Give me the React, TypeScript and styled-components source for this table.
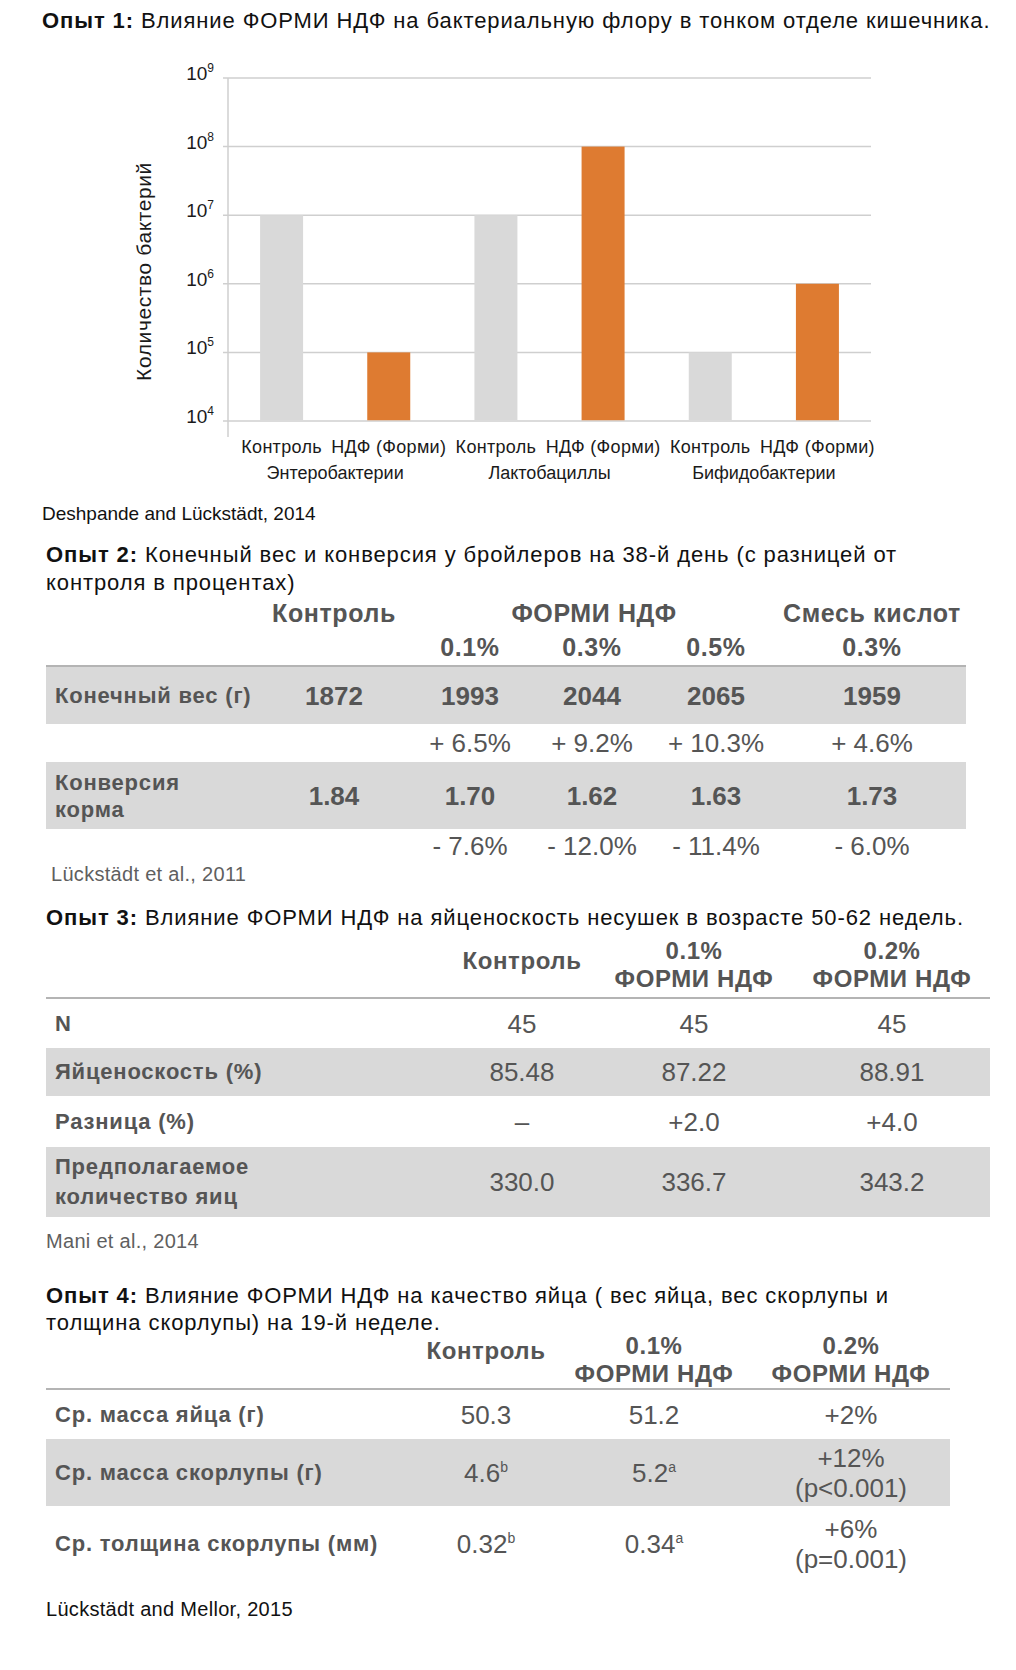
import React from 'react';
import styled, { createGlobalStyle } from 'styled-components';

const GlobalStyle = createGlobalStyle`
	body {
		margin: 0;
		background: #ffffff;
		font-family: "Liberation Sans", Arial, sans-serif;
	}
`;

const Page = styled.div`
	width: 1016px;
	padding-top: 7px;
	padding-bottom: 40px;
	font-family: "Liberation Sans", Arial, sans-serif;
	color: #111111;
`;

const Section = styled.section<{ $indent: number; $top?: number }>`
	padding-left: ${p => p.$indent}px;
	margin-top: ${p => p.$top || 0}px;
`;

const Title = styled.h2<{ $lh?: number; $wrap?: boolean }>`
	margin: 0;
	max-width: ${p => (p.$wrap ? '925px' : 'none')};
	font-size: 22px;
	font-weight: 400;
	letter-spacing: 0.9px;
	line-height: ${p => p.$lh || 28}px;
	color: #111111;
	white-space: ${p => (p.$wrap ? 'normal' : 'nowrap')};

	b {
		font-weight: 700;
	}
`;

const Source = styled.p<{ $muted?: boolean; $top?: number; $shift?: number; $size?: number }>`
	margin: ${p => p.$top || 0}px 0 0 ${p => p.$shift || 0}px;
	font-size: ${p => p.$size || 20}px;
	letter-spacing: ${p => (p.$size ? 0 : 0.3)}px;
	line-height: 24px;
	color: ${p => (p.$muted ? '#5f5f5f' : '#111111')};
`;

const ChartBox = styled.svg`
	display: block;
	font-family: "Liberation Sans", Arial, sans-serif;
`;

const Table = styled.div<{ $width: number; $top?: number }>`
	width: ${p => p.$width}px;
	margin-top: ${p => p.$top || 0}px;
	color: #555555;
`;

const Head = styled.div`
	border-bottom: 2px solid #b4b4b4;
`;

const Row = styled.div<{ $cols: string; $h: number; $shade?: boolean }>`
	display: grid;
	grid-template-columns: ${p => p.$cols};
	height: ${p => p.$h}px;
	background: ${p => (p.$shade ? '#d9d9d9' : 'transparent')};
`;

const Cell = styled.div<{ $span?: number; $size?: number; $bold?: boolean; $lh?: number; $lift?: number }>`
	grid-column: span ${p => p.$span || 1};
	display: flex;
	align-items: center;
	justify-content: center;
	padding-bottom: ${p => p.$lift || 0}px;
	text-align: center;
	font-size: ${p => p.$size || 26}px;
	font-weight: ${p => (p.$bold ? 700 : 400)};
	letter-spacing: ${p => (p.$bold && (p.$size || 26) < 26 ? 0.6 : 0)}px;
	line-height: ${p => p.$lh || 28}px;
	white-space: nowrap;
`;

const Label = styled.div<{ $lh?: number }>`
	display: flex;
	align-items: center;
	padding-left: 9px;
	font-size: 22px;
	font-weight: 700;
	letter-spacing: 0.8px;
	line-height: ${p => p.$lh || 28}px;
	white-space: nowrap;
`;

const Sup = styled.sup`
	font-size: 14px;
	line-height: 0;
	vertical-align: 10px;
	letter-spacing: 0;
`;

// --- chart -----------------------------------------------------------------

const GRID_X1 = 181;
const AXIS_X = 186;
const GRID_X2 = 829;
const TOP_Y = 43;
const STEP = 68.6;
const SLOT = (GRID_X2 - AXIS_X) / 6;
const BAR_W = 43;

const yOf = (exp: number) => TOP_Y + (9 - exp) * STEP;

const groups = [
	{ name: 'Энтеробактерии', control: 7, ndf: 5 },
	{ name: 'Лактобациллы', control: 7, ndf: 8 },
	{ name: 'Бифидобактерии', control: 5, ndf: 6 },
];

function BarChart() {
	const exps = [9, 8, 7, 6, 5, 4];
	return (
		<ChartBox width={860} height={467} viewBox="0 0 860 467">
			{exps.map(e => (
				<g key={e}>
					<line x1={GRID_X1} x2={GRID_X2} y1={yOf(e)} y2={yOf(e)} stroke="#cfcfcf" strokeWidth={1.5} />
					<text x={172} y={yOf(e) + 2} textAnchor="end" fontSize={19} fill="#1a1a1a">
						10<tspan fontSize={12} dy={-8}>{e}</tspan>
					</text>
				</g>
			))}
			<line x1={AXIS_X} x2={AXIS_X} y1={TOP_Y} y2={402} stroke="#cfcfcf" strokeWidth={1.5} />
			<text
				transform="translate(101 236.5) rotate(-90)"
				textAnchor="middle"
				dominantBaseline="central"
				fontSize={21}
				letterSpacing={0.6}
				fill="#1a1a1a"
			>
				Количество бактерий
			</text>
			{groups.map((g, i) => {
				const c1 = AXIS_X + SLOT * (i * 2) + SLOT / 2;
				const c2 = c1 + SLOT;
				const base = yOf(4);
				return (
					<g key={g.name}>
						<rect x={c1 - BAR_W / 2} y={yOf(g.control)} width={BAR_W} height={base - yOf(g.control) - 0.75} fill="#d9d9d9" />
						<rect x={c2 - BAR_W / 2} y={yOf(g.ndf)} width={BAR_W} height={base - yOf(g.ndf) - 0.75} fill="#de7b31" />
						<text x={c1} y={418} textAnchor="middle" fontSize={18} letterSpacing={0.3} fill="#1a1a1a">Контроль</text>
						<text x={c2} y={418} textAnchor="middle" fontSize={18} letterSpacing={0.3} fill="#1a1a1a">НДФ (Форми)</text>
						<text x={(c1 + c2) / 2} y={444} textAnchor="middle" fontSize={18} fill="#1a1a1a">{g.name}</text>
					</g>
				);
			})}
		</ChartBox>
	);
}

// --- tables ----------------------------------------------------------------

const COLS2 = '212px 152px 120px 124px 124px 188px';
const COLS3 = '404px 144px 200px 196px';
const COLS4 = '370px 140px 196px 198px';

function BroilerTable() {
	const weight = ['1872', '1993', '2044', '2065', '1959'];
	const weightDiff = ['', '+ 6.5%', '+ 9.2%', '+ 10.3%', '+ 4.6%'];
	const fcr = ['1.84', '1.70', '1.62', '1.63', '1.73'];
	const fcrDiff = ['', '- 7.6%', '- 12.0%', '- 11.4%', '- 6.0%'];
	return (
		<Table $width={920}>
			<Head>
				<Row $cols={COLS2} $h={32}>
					<div />
					<Cell $bold $size={25}>Контроль</Cell>
					<Cell $bold $size={25} $span={3}>ФОРМИ НДФ</Cell>
					<Cell $bold $size={25}>Смесь кислот</Cell>
				</Row>
				<Row $cols={COLS2} $h={36}>
					<div />
					<div />
					<Cell $bold $size={25}>0.1%</Cell>
					<Cell $bold $size={25}>0.3%</Cell>
					<Cell $bold $size={25}>0.5%</Cell>
					<Cell $bold $size={25}>0.3%</Cell>
				</Row>
			</Head>
			<Row $cols={COLS2} $h={57} $shade>
				<Label>Конечный вес (г)</Label>
				{weight.map((v, i) => <Cell key={i} $bold>{v}</Cell>)}
			</Row>
			<Row $cols={COLS2} $h={38}>
				<div />
				{weightDiff.map((v, i) => <Cell key={i}>{v}</Cell>)}
			</Row>
			<Row $cols={COLS2} $h={67} $shade>
				<Label $lh={27}><span>Конверсия<br />корма</span></Label>
				{fcr.map((v, i) => <Cell key={i} $bold>{v}</Cell>)}
			</Row>
			<Row $cols={COLS2} $h={33}>
				<div />
				{fcrDiff.map((v, i) => <Cell key={i}>{v}</Cell>)}
			</Row>
		</Table>
	);
}

function LayingTable() {
	return (
		<Table $width={944}>
			<Head>
				<Row $cols={COLS3} $h={65}>
					<div />
					<Cell $bold $size={24} $lift={8}>Контроль</Cell>
					<Cell $bold $size={24}><span>0.1%<br />ФОРМИ НДФ</span></Cell>
					<Cell $bold $size={24}><span>0.2%<br />ФОРМИ НДФ</span></Cell>
				</Row>
			</Head>
			<Row $cols={COLS3} $h={49}>
				<Label>N</Label>
				<Cell>45</Cell>
				<Cell>45</Cell>
				<Cell>45</Cell>
			</Row>
			<Row $cols={COLS3} $h={48} $shade>
				<Label>Яйценоскость (%)</Label>
				<Cell>85.48</Cell>
				<Cell>87.22</Cell>
				<Cell>88.91</Cell>
			</Row>
			<Row $cols={COLS3} $h={51}>
				<Label>Разница (%)</Label>
				<Cell>–</Cell>
				<Cell>+2.0</Cell>
				<Cell>+4.0</Cell>
			</Row>
			<Row $cols={COLS3} $h={70} $shade>
				<Label $lh={30}><span>Предполагаемое<br />количество яиц</span></Label>
				<Cell>330.0</Cell>
				<Cell>336.7</Cell>
				<Cell>343.2</Cell>
			</Row>
		</Table>
	);
}

function EggTable() {
	return (
		<Table $width={904} $top={-4}>
			<Head>
				<Row $cols={COLS4} $h={56}>
					<div />
					<Cell $bold $size={24} $lift={18}>Контроль</Cell>
					<Cell $bold $size={24}><span>0.1%<br />ФОРМИ НДФ</span></Cell>
					<Cell $bold $size={24}><span>0.2%<br />ФОРМИ НДФ</span></Cell>
				</Row>
			</Head>
			<Row $cols={COLS4} $h={49}>
				<Label>Ср. масса яйца (г)</Label>
				<Cell>50.3</Cell>
				<Cell>51.2</Cell>
				<Cell>+2%</Cell>
			</Row>
			<Row $cols={COLS4} $h={67} $shade>
				<Label>Ср. масса скорлупы (г)</Label>
				<Cell><span>4.6<Sup>b</Sup></span></Cell>
				<Cell><span>5.2<Sup>a</Sup></span></Cell>
				<Cell $lh={30}><span>+12%<br />(p&lt;0.001)</span></Cell>
			</Row>
			<Row $cols={COLS4} $h={75}>
				<Label>Ср. толщина скорлупы (мм)</Label>
				<Cell><span>0.32<Sup>b</Sup></span></Cell>
				<Cell><span>0.34<Sup>a</Sup></span></Cell>
				<Cell $lh={30}><span>+6%<br />(p=0.001)</span></Cell>
			</Row>
		</Table>
	);
}

export default function App() {
	return (
		<Page>
			<GlobalStyle />
			<Section $indent={42}>
				<Title><b>Опыт 1:</b> Влияние ФОРМИ НДФ на бактериальную флору в тонком отделе кишечника.</Title>
				<BarChart />
				<Source $size={19}>Deshpande and Lückstädt, 2014</Source>
			</Section>

			<Section $indent={46} $top={15}>
				<Title $wrap><b>Опыт 2:</b> Конечный вес и конверсия у бройлеров на 38-й день (с разницей от контроля в процентах)</Title>
				<BroilerTable />
				<Source $muted $shift={5}>Lückstädt et al., 2011</Source>
			</Section>

			<Section $indent={46} $top={18}>
				<Title $wrap><b>Опыт 3:</b> Влияние ФОРМИ НДФ на яйценоскость несушек в возрасте 50-62 недель.</Title>
				<LayingTable />
				<Source $muted $top={12}>Mani et al., 2014</Source>
			</Section>

			<Section $indent={46} $top={29}>
				<Title $wrap $lh={27}><b>Опыт 4:</b> Влияние ФОРМИ НДФ на качество яйца ( вес яйца, вес скорлупы и толщина скорлупы) на 19-й неделе.</Title>
				<EggTable />
				<Source $top={16}>Lückstädt and Mellor, 2015</Source>
			</Section>
		</Page>
	);
}
